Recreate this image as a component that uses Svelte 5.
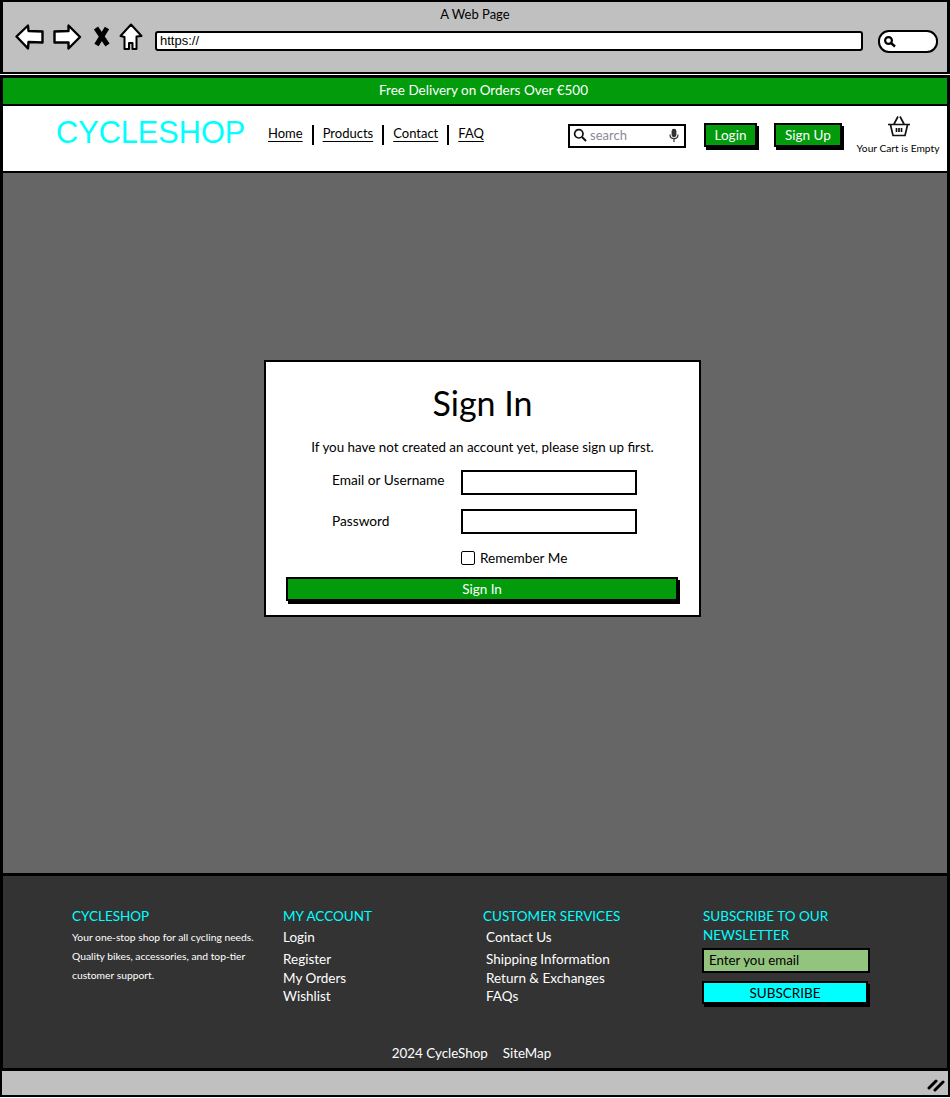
<script>
  const nav = ['Home', 'Products', 'Contact', 'FAQ'];
  const account = ['Login', 'Register', 'My Orders', 'Wishlist'];
  const services = ['Contact Us', 'Shipping Information', 'Return & Exchanges', 'FAQs'];
</script>

<div class="page">
  <header class="chrome">
    <div class="title">A Web Page</div>
    <div class="tools">
      <svg class="nav-icon" width="30" height="28" viewBox="0 0 30 28"><path d="M1.5 13.5 L13 2.5 L13.5 8 L27.5 8.5 L27.5 19.5 L13.5 19 L13 25.5 Z" fill="#fff" stroke="#000" stroke-width="2.4" stroke-linejoin="round"/></svg>
      <svg class="nav-icon fwd" width="30" height="28" viewBox="0 0 30 28"><path d="M28 14 L16.5 2.5 L16.5 8 L2.5 8.5 L2.5 19.5 L16.5 19.5 L16.5 25.5 Z" fill="#fff" stroke="#000" stroke-width="2.4" stroke-linejoin="round"/></svg>
      <svg class="x-icon" width="18" height="24" viewBox="0 0 18 24"><path d="M3 3 L14.5 20 M14 3 L3.5 20" fill="none" stroke="#000" stroke-width="5"/></svg>
      <svg class="home-icon" width="24" height="28" viewBox="0 0 24 28"><path d="M12 1.5 L22.5 13 L17.5 13.5 L17.5 26 L13.5 26 L13.5 20 L10 20 L10 26 L5.5 26 L5.5 14 L1.5 13 Z" fill="#fff" stroke="#000" stroke-width="2" stroke-linejoin="round"/></svg>
      <div class="url">https://</div>
      <div class="browser-search">
        <svg width="13" height="13" viewBox="0 0 13 13"><circle cx="5.5" cy="5.5" r="3.4" fill="none" stroke="#000" stroke-width="2.2"/><path d="M8 8 L12 11.5" stroke="#000" stroke-width="2.4"/></svg>
      </div>
    </div>
  </header>

  <div class="banner">Free Delivery on Orders Over €500</div>

  <div class="site-header">
    <div class="logo">CYCLESHOP</div>
    <nav class="nav">
      {#each nav as item}
        <a href="#top">{item}</a>
      {/each}
    </nav>
    <div class="search">
      <svg width="14" height="14" viewBox="0 0 14 14"><circle cx="5.8" cy="5.8" r="4.2" fill="none" stroke="#111" stroke-width="1.7"/><path d="M9 9 L13 13" stroke="#111" stroke-width="1.9"/></svg>
      <span class="search-text">search</span>
      <svg class="mic" width="10" height="15" viewBox="0 0 10 15"><rect x="2.6" y="0.8" width="4.8" height="8.4" rx="2.4" fill="#333"/><path d="M1 6.5 C1 12 9 12 9 6.5 M5 11 V14" fill="none" stroke="#333" stroke-width="1.2"/></svg>
    </div>
    <button class="btn login">Login</button>
    <button class="btn signup">Sign Up</button>
    <div class="cart">
      <svg width="24" height="22" viewBox="0 0 24 22"><path d="M1 9.5 H23 M3.5 10 L6 20.5 H18 L20.5 10 M7 9 L11 1.5 M17 9 L13 1.5 M9.5 13 V17 M12 13 V17 M14.5 13 V17" fill="none" stroke="#111" stroke-width="1.7"/></svg>
      <span>Your Cart is Empty</span>
    </div>
  </div>

  <main class="main">
    <section class="card">
      <h1>Sign In</h1>
      <p class="intro">If you have not created an account yet, please sign up first.</p>
      <div class="row first"><span class="label">Email or Username</span><div class="field"></div></div>
      <div class="row second"><span class="label lower">Password</span><div class="field"></div></div>
      <div class="remember"><span class="check"></span><span>Remember Me</span></div>
      <button class="submit">Sign In</button>
    </section>
  </main>

  <footer class="footer">
    <div class="cols">
      <div class="col about">
        <h3>CYCLESHOP</h3>
        <p>Your one-stop shop for all cycling needs. Quality bikes, accessories, and top-tier customer support.</p>
      </div>
      <div class="col links">
        <h3>MY ACCOUNT</h3>
        <ul>{#each account as item}<li>{item}</li>{/each}</ul>
      </div>
      <div class="col links services">
        <h3>CUSTOMER SERVICES</h3>
        <ul>{#each services as item}<li>{item}</li>{/each}</ul>
      </div>
      <div class="col news">
        <h3>SUBSCRIBE TO OUR NEWSLETTER</h3>
        <div class="email">Enter you email</div>
        <button class="subscribe">SUBSCRIBE</button>
      </div>
    </div>
    <div class="copy"><span>2024 CycleShop</span><span>SiteMap</span></div>
  </footer>

  <div class="status">
    <svg width="18" height="14" viewBox="0 0 18 14"><path d="M2 10 L9 3 M8 12 L16 4" stroke="#000" stroke-width="3" stroke-linecap="round"/></svg>
  </div>
</div>

<style>
  :global(body) { margin: 0; background: #fff; }
  .page {
    width: 950px;
    height: 1097px;
    box-sizing: border-box;
    display: flex;
    flex-direction: column;
    font-family: "Lato", "Noto Sans", sans-serif;
    color: #000;
    overflow: hidden;
  }
  .chrome {
    height: 74px;
    flex: none;
    box-sizing: border-box;
    background: #c0c0c0;
    border: 3px solid #000;
    border-top-width: 2px;
    border-bottom-width: 2px;
  }
  .title { text-align: center; font-size: 13px; line-height: 16px; padding-top: 4px; }
  .tools { display: flex; align-items: center; padding: 4px 0 0 12px; height: 30px; }
  .nav-icon { flex: none; margin-bottom: 8px; }
  .fwd { margin-left: 7px; }
  .x-icon { margin: 0 0 8px 11px; flex: none; }
  .home-icon { margin: 0 0 8px 8px; flex: none; }
  .url {
    margin: 0 0 1px 12px;
    width: 701px;
    height: 16px;
    background: #fff;
    border: 2.5px solid #000;
    border-radius: 3px;
    font: 13px/16px "Liberation Sans", sans-serif;
    padding-left: 3px;
    box-sizing: content-box;
  }
  .browser-search {
    margin-left: 15px;
    width: 53px;
    height: 19px;
    background: #fff;
    border: 2.5px solid #000;
    border-radius: 11px;
    display: flex;
    align-items: center;
    padding-left: 3px;
    box-sizing: content-box;
    flex: none;
  }
  .banner {
    margin-top: 1px;
    height: 30px;
    flex: none;
    box-sizing: border-box;
    background: #029b0c;
    border: 3px solid #000;
    border-bottom-width: 1px;
    color: #fff;
    text-align: center;
    font-size: 13.5px;
    line-height: 25px;
    padding-left: 17px;
  }
  .site-header {
    height: 68px;
    flex: none;
    box-sizing: border-box;
    background: #fff;
    border: 3px solid #000;
    border-top-width: 1px;
    border-bottom-width: 2px;
    display: flex;
    align-items: flex-start;
  }
  .logo {
    font: 30.7px/36px "Liberation Sans", sans-serif;
    color: #00ffff;
    margin: 9px 0 0 53px;
    width: 212px;
    flex: none;
  }
  .nav { display: flex; margin-top: 19px; width: 293px; flex: none; }
  .nav a {
    color: #000;
    font-size: 13px;
    line-height: 17px;
    padding: 0 9px 3px;
    border-left: 2px solid #000;
    text-decoration: underline;
    text-underline-offset: 3px;
  }
  .nav a:first-child { padding-left: 0; border-left: 0; }
  .search {
    margin: 18px 0 0 7px;
    width: 118px;
    height: 24px;
    box-sizing: border-box;
    border: 2px solid #000;
    display: flex;
    align-items: center;
    padding: 0 5px 2px 3px;
    gap: 3px;
    flex: none;
  }
  .search-text { color: #8a8a92; font-size: 13px; flex: 1; }
  .btn {
    margin-top: 17px;
    height: 24px;
    box-sizing: border-box;
    padding: 0;
    border: 2px solid #000;
    background: #029b0c;
    color: #fff;
    font: 13.5px "Lato", sans-serif;
    box-shadow: 2px 3px 0 #000;
    flex: none;
  }
  .login { width: 53px; margin-left: 18px; }
  .signup { width: 68px; margin-left: 17px; }
  .cart {
    margin: 9px 0 0 14px;
    display: flex;
    flex-direction: column;
    align-items: center;
    width: 84px;
    font-size: 10.2px;
    white-space: nowrap;
    gap: 5px;
    flex: none;
  }
  .cart svg { margin-left: 1px; }
  .cart span { line-height: 13px; }
  .main {
    flex: 1;
    background: #666;
    border-left: 3px solid #000;
    border-right: 3px solid #000;
    display: flex;
    align-items: flex-start;
    min-height: 0;
  }
  .card {
    margin: 187px 0 0 261px;
    width: 437px;
    height: 257px;
    flex: none;
    box-sizing: border-box;
    background: #fff;
    border: 2px solid #000;
    display: flex;
    flex-direction: column;
  }
  h1 {
    margin: 20px 0 0;
    font-size: 34px;
    font-weight: 400;
    line-height: 42px;
    text-align: center;
  }
  .intro { margin: 14px 0 0; font-size: 13.4px; line-height: 18px; text-align: center; }
  .row { display: flex; align-items: flex-start; padding-left: 66px; font-size: 13.7px; }
  .first { margin-top: 14px; }
  .second { margin-top: 14px; }
  .label { width: 129px; line-height: 20px; flex: none; }
  .lower { padding-top: 2px; }
  .field {
    width: 176px;
    height: 25px;
    box-sizing: border-box;
    border: 2px solid #000;
    background: #fff;
  }
  .remember {
    display: flex;
    align-items: center;
    margin: 15px 0 0 195px;
    font-size: 13.6px;
    line-height: 18px;
    gap: 5px;
  }
  .check { width: 14px; height: 14px; box-sizing: border-box; border: 1.5px solid #000; border-radius: 2px; }
  .submit {
    margin: 10px 0 0 20px;
    width: 392px;
    height: 24px;
    box-sizing: border-box;
    padding: 0;
    border: 2px solid #000;
    background: #029b0c;
    color: #fff;
    font: 13.5px "Lato", sans-serif;
    box-shadow: 2px 3px 0 #000;
  }
  .footer {
    height: 198px;
    flex: none;
    box-sizing: border-box;
    background: #333;
    border: 3px solid #000;
    color: #fff;
  }
  .cols { display: flex; padding: 31px 0 0 69px; height: 151px; box-sizing: border-box; }
  .col { flex: none; }
  .about { width: 211px; }
  .links { width: 200px; }
  .services { width: 220px; }
  .news { width: 170px; }
  h3 { margin: 0; color: #00ffff; font-size: 13.5px; font-weight: 400; line-height: 19px; }
  .about p { margin: 2px 0 0; font-size: 10.3px; line-height: 19px; width: 190px; }
  ul { list-style: none; margin: 2px 0 0; padding: 0; font-size: 13.5px; }
  .services ul { padding-left: 3px; }
  li { line-height: 18px; height: 18.5px; }
  li:first-child { height: 22px; }
  .email {
    margin-top: 3px;
    margin-left: -1px;
    width: 168px;
    height: 25px;
    box-sizing: border-box;
    background: #93c47d;
    border: 2px solid #000;
    color: #000;
    font-size: 13.3px;
    line-height: 21px;
    padding-left: 5px;
  }
  .subscribe {
    display: block;
    margin-top: 8px;
    margin-left: -1px;
    width: 166px;
    height: 23px;
    box-sizing: border-box;
    padding: 0;
    border: 2px solid #000;
    background: #00ffff;
    color: #000;
    font: 13.5px "Lato", sans-serif;
    box-shadow: 2px 3px 0 #000;
  }
  .copy { display: flex; justify-content: center; gap: 15px; font-size: 13.4px; line-height: 18px; margin-top: 17px; padding-right: 7px; }
  .status {
    height: 26px;
    flex: none;
    box-sizing: border-box;
    background: #c0c0c0;
    border: 2px solid #000;
    border-top: 0;
    display: flex;
    justify-content: flex-end;
    align-items: flex-end;
    padding: 0 3px 3px 0;
  }
</style>
